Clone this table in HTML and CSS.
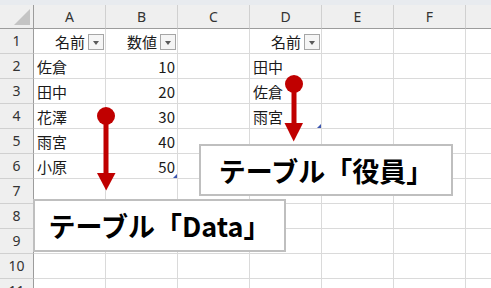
FILE: index.html
```html
<!DOCTYPE html>
<html lang="ja">
<head>
<meta charset="utf-8">
<link rel="stylesheet" href="styles.css">
</head>
<body>
<div class="sheet">
  <div class="topstrip"></div>
  <div class="grid">
    <div class="corner"><span class="corner-tri"></span></div>
    <div class="colhead">A</div><div class="colhead">B</div><div class="colhead">C</div><div class="colhead">D</div><div class="colhead">E</div><div class="colhead">F</div><div class="colhead last"></div>

    <div class="rowhead">1</div>
    <div class="cell th">名前<span class="filter"></span></div>
    <div class="cell th">数値<span class="filter"></span></div>
    <div class="cell"></div>
    <div class="cell th">名前<span class="filter"></span></div>
    <div class="cell"></div><div class="cell"></div><div class="cell last"></div>

    <div class="rowhead">2</div>
    <div class="cell">佐倉</div><div class="cell num">10</div><div class="cell"></div><div class="cell">田中</div><div class="cell"></div><div class="cell"></div><div class="cell last"></div>

    <div class="rowhead">3</div>
    <div class="cell">田中</div><div class="cell num">20</div><div class="cell"></div><div class="cell">佐倉</div><div class="cell"></div><div class="cell"></div><div class="cell last"></div>

    <div class="rowhead">4</div>
    <div class="cell">花澤</div><div class="cell num">30</div><div class="cell"></div><div class="cell">雨宮</div><div class="cell"></div><div class="cell"></div><div class="cell last"></div>

    <div class="rowhead">5</div>
    <div class="cell">雨宮</div><div class="cell num">40</div><div class="cell"></div><div class="cell"></div><div class="cell"></div><div class="cell"></div><div class="cell last"></div>

    <div class="rowhead">6</div>
    <div class="cell">小原</div><div class="cell num">50</div><div class="cell"></div><div class="cell"></div><div class="cell"></div><div class="cell"></div><div class="cell last"></div>

    <div class="rowhead">7</div>
    <div class="cell"></div><div class="cell"></div><div class="cell"></div><div class="cell"></div><div class="cell"></div><div class="cell"></div><div class="cell last"></div>

    <div class="rowhead">8</div>
    <div class="cell"></div><div class="cell"></div><div class="cell"></div><div class="cell"></div><div class="cell"></div><div class="cell"></div><div class="cell last"></div>

    <div class="rowhead">9</div>
    <div class="cell"></div><div class="cell"></div><div class="cell"></div><div class="cell"></div><div class="cell"></div><div class="cell"></div><div class="cell last"></div>

    <div class="rowhead">10</div>
    <div class="cell"></div><div class="cell"></div><div class="cell"></div><div class="cell"></div><div class="cell"></div><div class="cell"></div><div class="cell last"></div>

    <div class="rowhead">11</div>
    <div class="cell"></div><div class="cell"></div><div class="cell"></div><div class="cell"></div><div class="cell"></div><div class="cell"></div><div class="cell last"></div>
  </div>

  <span class="handle handle-data"></span>
  <span class="handle handle-yakuin"></span>

  <svg class="arrows" width="491" height="288" viewBox="0 0 491 288">
    <g fill="#c00000">
      <circle cx="106" cy="116" r="9"/>
      <rect x="103.5" y="116" width="5" height="58"/>
      <polygon points="97,173 115.5,173 106.2,190.5"/>
      <circle cx="294" cy="84" r="9"/>
      <rect x="291.5" y="84" width="5" height="40"/>
      <polygon points="284.5,123 303,123 293.7,141.5"/>
    </g>
  </svg>

  <div class="label label-yakuin">テーブル「役員」</div>
  <div class="label label-data">テーブル「Data」</div>
</div>
</body>
</html>
```

FILE: styles.css
```css
html, body {
  margin: 0;
  padding: 0;
  background: #ffffff;
  overflow: hidden;
}

.sheet {
  position: relative;
  width: 491px;
  height: 288px;
  overflow: hidden;
  font-family: "Noto Sans CJK JP", "Noto Sans", sans-serif;
}

.topstrip {
  height: 5px;
  background: #e8ebef;
}

.grid {
  display: grid;
  grid-template-columns: 34px repeat(6, 72px) 1fr;
  grid-template-rows: 24px repeat(11, 25px);
}

.grid > div {
  box-sizing: border-box;
}

.corner {
  position: relative;
  background: #efefef;
  border-right: 1px solid #9c9c9c;
  border-bottom: 1px solid #9c9c9c;
}

.corner-tri {
  position: absolute;
  right: 3px;
  bottom: 3px;
  width: 0;
  height: 0;
  border-left: 16px solid transparent;
  border-bottom: 16px solid #c4c4c4;
}

.colhead {
  background: #efefef;
  border-right: 1px solid #d0d0d0;
  border-bottom: 1px solid #9c9c9c;
  display: flex;
  align-items: center;
  justify-content: center;
  font-family: "Noto Sans", "Liberation Sans", sans-serif;
  font-size: 14px;
  color: #333333;
  line-height: 1;
}

.colhead.last {
  border-right: none;
}

.rowhead {
  background: #efefef;
  border-right: 1px solid #9c9c9c;
  border-bottom: 1px solid #d0d0d0;
  display: flex;
  align-items: center;
  justify-content: center;
  font-family: "Noto Sans", "Liberation Sans", sans-serif;
  font-size: 14px;
  color: #333333;
  line-height: 1;
}

.cell {
  border-right: 1px solid #dadada;
  border-bottom: 1px solid #dadada;
  display: flex;
  align-items: center;
  padding-left: 3px;
  font-size: 15px;
  color: #1a1a1a;
  line-height: 1;
  white-space: nowrap;
}

.cell.last {
  border-right: none;
}

.cell.num {
  justify-content: flex-end;
  padding-left: 0;
  padding-right: 2px;
}

.cell.th {
  justify-content: flex-end;
  padding-left: 0;
  padding-right: 1px;
  gap: 3px;
}

.filter {
  position: relative;
  box-sizing: border-box;
  width: 16px;
  height: 16px;
  border: 1px solid #a6a6a6;
  background: #f5f5f5;
  margin-top: 1px;
}

.filter::after {
  content: "";
  position: absolute;
  left: 4px;
  top: 6px;
  width: 0;
  height: 0;
  border-left: 3.5px solid transparent;
  border-right: 3.5px solid transparent;
  border-top: 4px solid #5a5a5a;
}

.handle {
  position: absolute;
  width: 0;
  height: 0;
  border-left: 4px solid transparent;
  border-bottom: 4px solid #3d56b0;
}

.handle-data {
  left: 173px;
  top: 174px;
}

.handle-yakuin {
  left: 317px;
  top: 124px;
}

.arrows {
  position: absolute;
  left: 0;
  top: 0;
  pointer-events: none;
}

.label {
  position: absolute;
  box-sizing: border-box;
  background: #ffffff;
  border: 2px solid #bfbfbf;
  display: flex;
  align-items: center;
  justify-content: center;
  font-family: "Noto Sans CJK JP", sans-serif;
  font-weight: 700;
  font-size: 27px;
  color: #000000;
  line-height: 1;
  white-space: nowrap;
}

.label-yakuin {
  left: 199px;
  top: 144px;
  width: 254px;
  height: 52px;
}

.label-data {
  left: 33px;
  top: 199px;
  width: 253px;
  height: 53px;
}
```
